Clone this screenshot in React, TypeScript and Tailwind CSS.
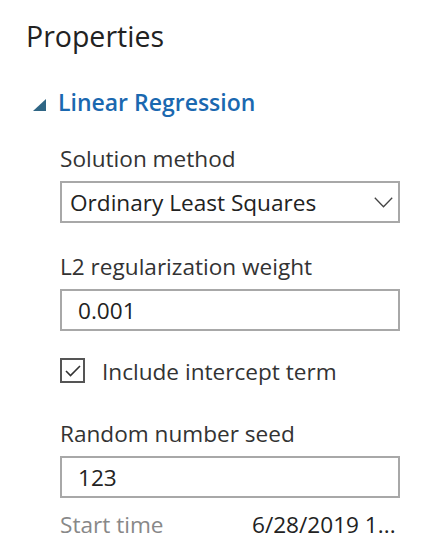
import React from "react";

export default function App() {
  return (
    <div className="w-[444px] h-[537px] overflow-hidden bg-white text-[#222]" style={{ fontFamily: '"Open Sans", "Noto Sans", sans-serif' }}>
      <div className="pl-[26px] pt-[16px]">
        <div className="text-[28.5px] leading-[40px] text-[#222]">Properties</div>
      </div>
      <div className="flex items-center pl-[33px] mt-[31px] h-[30px]">
        <svg width="13" height="12" viewBox="0 0 13 12" className="mr-[12px] mt-[5px]">
          <polygon points="13,0 13,12 0,12" fill="#2f6685" />
        </svg>
        <span className="text-[23px] leading-[30px] font-semibold text-[#1a68b0]">Linear Regression</span>
      </div>
      <div className="pl-[60px] pr-[44px] flex flex-col">
        <div className="mt-[28px] text-[22.6px] leading-[28px] text-[#333]">Solution method</div>
        <div className="mt-[8px] h-[42px] border-2 border-[#a8a8a8] flex items-center justify-between pl-[8px] pr-[5px]">
          <span className="text-[22.6px] leading-[28px] text-[#222] pt-[2px]">Ordinary Least Squares</span>
          <svg width="19" height="11" viewBox="0 0 19 11">
            <polyline points="0.8,0.8 9.5,9.7 18.2,0.8" fill="none" stroke="#444" strokeWidth="1.3" />
          </svg>
        </div>
        <div className="mt-[30px] text-[22.6px] leading-[28px] text-[#333]">L2 regularization weight</div>
        <div className="mt-[8px] h-[42px] border-2 border-[#a8a8a8] flex items-center pl-[16px]">
          <span className="text-[22.6px] leading-[28px] text-[#222] pt-[2px]">0.001</span>
        </div>
        <div className="mt-[27px] flex items-start">
          <div className="w-[25px] h-[25px] border-2 border-[#555] flex items-center justify-center">
            <svg width="16" height="12" viewBox="0 0 16 12">
              <polyline points="1,6 5.5,10.5 15,1" fill="none" stroke="#333" strokeWidth="1.6" />
            </svg>
          </div>
          <span className="ml-[17px] text-[22.6px] leading-[28px] text-[#333]">Include intercept term</span>
        </div>
        <div className="mt-[34px] text-[22.6px] leading-[28px] text-[#333]">Random number seed</div>
        <div className="mt-[8px] h-[42px] border-2 border-[#a8a8a8] flex items-center pl-[16px]">
          <span className="text-[22.6px] leading-[28px] text-[#222] pt-[2px]">123</span>
        </div>
      </div>
      <div className="flex pl-[60px] mt-[16px] text-[22.6px] leading-[22px]">
        <span className="w-[192px] text-[#888]">Start time</span>
        <span className="text-[#222]">6/28/2019 1...</span>
      </div>
    </div>
  );
}
